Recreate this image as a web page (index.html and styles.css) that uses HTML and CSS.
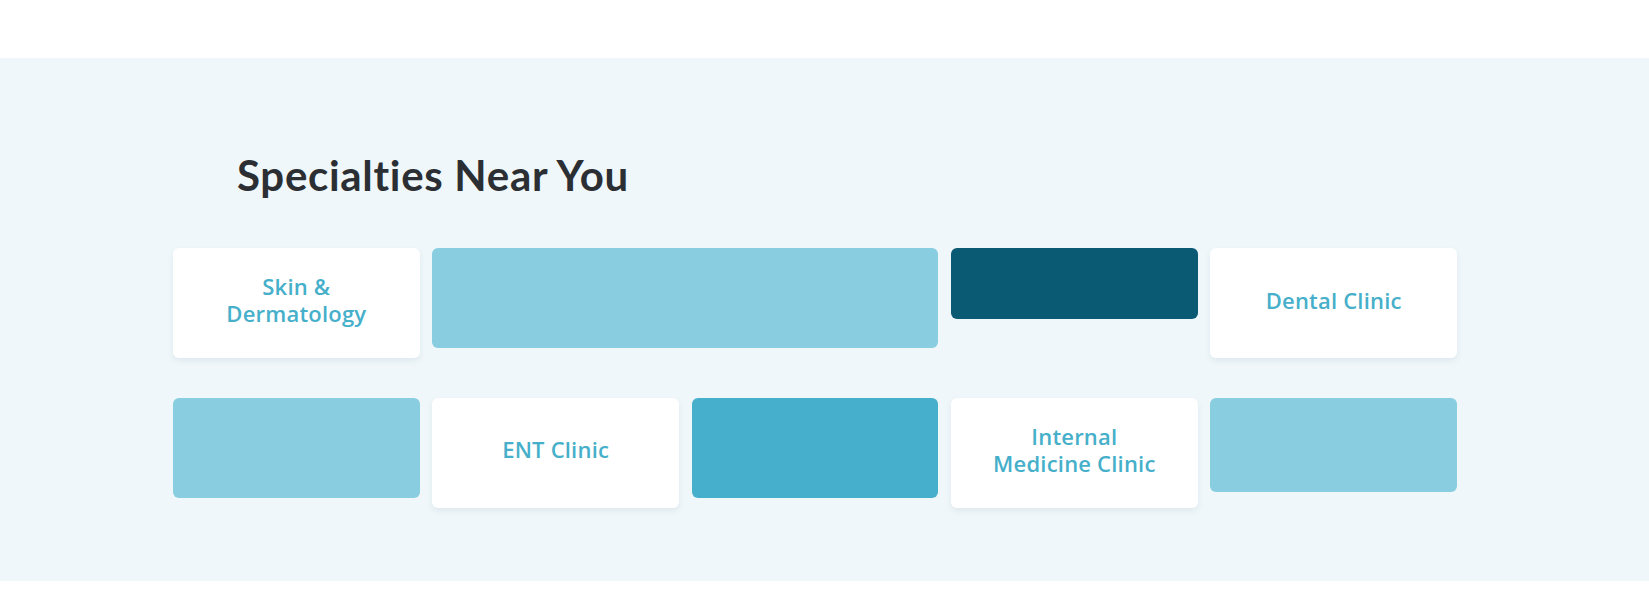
FILE: index.html
```html
<!DOCTYPE html>
<html lang="en">
<head>
  <meta charset="UTF-8">
  <meta name="viewport" content="width=device-width, initial-scale=1.0">
  <title>Specialties Near You</title>
  <link rel="stylesheet" href="styles.css">
</head>
<body>
  <header class="topbar"></header>
  <section class="specialties">
    <div class="container">
      <h2>Specialties Near You</h2>
      <div class="grid">
        <a href="#" class="card">Skin &amp;<br>Dermatology</a>
        <div class="block light wide h100"></div>
        <div class="block dark h70"></div>
        <a href="#" class="card">Dental Clinic</a>

        <div class="block light h100"></div>
        <a href="#" class="card">ENT Clinic</a>
        <div class="block mid h100"></div>
        <a href="#" class="card">Internal<br>Medicine Clinic</a>
        <div class="block light h94"></div>
      </div>
    </div>
  </section>
</body>
</html>
```

FILE: styles.css
```css
* { box-sizing: border-box; margin: 0; padding: 0; }
body { font-family: "Open Sans", Arial, sans-serif; background: #fff; color: #2b2f33; }
.topbar { height: 58px; background: #fff; }
.specialties { background: #eff7fa; padding: 92px 0 73px; }
.container { width: 1284px; margin-left: 173px; }
h2 { font-family: Lato, "Open Sans", sans-serif; font-weight: 700; font-size: 42px; line-height: 50px; letter-spacing: 0.7px; font-variant-ligatures: none; color: #2b2f33; padding-left: 64px; margin-bottom: 48px; }
.grid { display: grid; grid-template-columns: repeat(5, 1fr); column-gap: 12.75px; row-gap: 39.5px; align-items: start; }
.card { height: 110px; padding-bottom: 6px; display: flex; align-items: center; justify-content: center; text-align: center; background: #fff; border-radius: 6px; box-shadow: 0 3px 6px rgba(40, 70, 90, 0.08); color: #46afca; font-size: 22px; font-weight: 600; line-height: 27px; letter-spacing: 0.2px; text-decoration: none; }
.block { border-radius: 6px; }
.block.wide { grid-column: span 2; }
.light { background: #88cde0; }
.mid { background: #46afcb; }
.dark { background: #0b5a73; }
.h100 { height: 100px; }
.h94 { height: 94px; }
.h70 { height: 71px; }
```
